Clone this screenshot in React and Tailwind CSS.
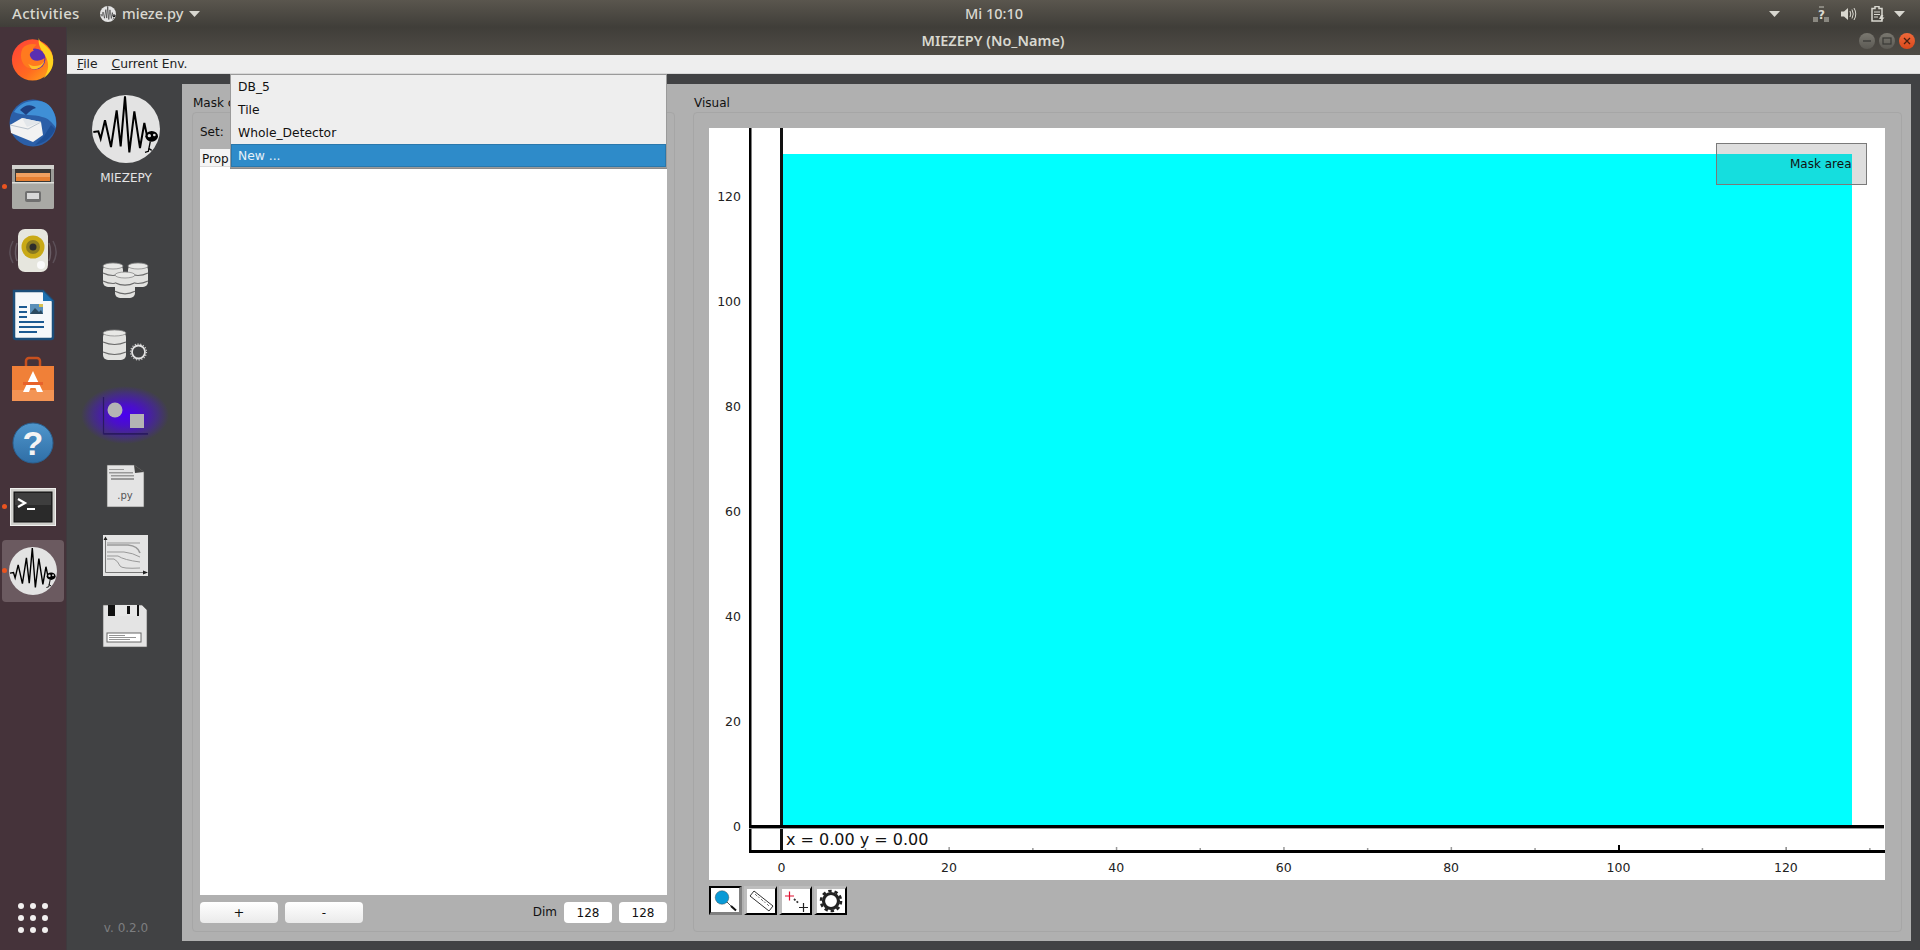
import React from "react";

const yTicks = [0, 20, 40, 60, 80, 100, 120];
const xTicks = [0, 20, 40, 60, 80, 100, 120];
const xMinor = [10, 30, 50, 70, 90, 110, 130];
const xPos = (v) => 781.5 + v * 8.37;
const yPos = (v) => 826 - v * 5.25;

function Wave({ className }) {
    return (
        <svg className={className} viewBox="21 26 204 204">
            <circle cx="123" cy="128" r="102" fill="#e3e3e3" />
            <polyline
                points="25,137 40,135 47,157 60,102 78,182 95,72 107,180 120,30 133,198 148,75 165,185 178,110 186,148"
                fill="none"
                stroke="#000"
                strokeWidth="6"
                strokeLinejoin="miter"
            />
            <ellipse cx="200" cy="150" rx="19" ry="16" fill="#000" />
            <circle cx="193" cy="148" r="5" fill="#e3e3e3" />
            <circle cx="208" cy="146" r="4" fill="#e3e3e3" />
            <path d="M196 165 L190 195 L180 198 M190 185 L200 192" stroke="#000" strokeWidth="4" fill="none" />
        </svg>
    );
}

function Firefox() {
    return (
        <svg className="w-[46px] h-[46px]" viewBox="0 0 48 48">
            <defs>
                <linearGradient id="ffa" x1="0" y1="0" x2="1" y2="1">
                    <stop offset="0" stopColor="#ff3f3a" />
                    <stop offset="0.6" stopColor="#ff6a20" />
                    <stop offset="1" stopColor="#ffb01a" />
                </linearGradient>
            </defs>
            <circle cx="23.5" cy="25" r="21.5" fill="url(#ffa)" />
            <path d="M30 2 C31 8 38 8 43 17 C48 27 44 38 35 44 C41 36 41 28 37 21 C33 15 29 10 30 2Z" fill="#ffd21f" />
            <circle cx="26" cy="24" r="11" fill="#5b2fb0" />
            <path d="M13 13 C17 8 24 8 28 9 C24 12 23 14 25 15 C22 16 20 18 21 21 C23 27 31 27 36 23 C36 31 28 36 21 34 C13 32 9 22 13 13Z" fill="#ff7a1e" />
            <path d="M19 29 C24 33 32 32 36 26 C34 33 27 36 22 34Z" fill="#ffc02a" />
        </svg>
    );
}

function Thunderbird() {
    return (
        <svg className="w-[50px] h-[50px]" viewBox="0 0 50 50">
            <circle cx="25" cy="25" r="23.5" fill="#2b5fa8" />
            <path d="M6 14 C12 3 28 0 38 5 C46 10 49 20 48 30 C44 24 40 20 34 19 C26 16 14 18 6 14Z" fill="#3f8fd6" />
            <path d="M12 12 C17 6 24 6 28 10 C24 11 21 14 18 17Z" fill="#1e3f80" />
            <path d="M2 27 L14 20 L33 24 L35 37 L25 44 L3 35Z" fill="#f2f2f2" />
            <path d="M2 27 L20 31 L33 24" fill="none" stroke="#b8c2cc" strokeWidth="1" />
            <path d="M14 20 L19 29 L33 24" fill="#e2e6ea" />
            <path d="M27 47 C37 45 44 39 47 31 L43 27 L36 38Z" fill="#1d4f96" />
        </svg>
    );
}

function Files() {
    return (
        <svg className="w-[46px] h-[48px]" viewBox="0 0 46 48">
            <rect x="2" y="2" width="42" height="44" rx="2" fill="#9c9c98" />
            <rect x="2" y="2" width="42" height="4" fill="#d2d2ce" />
            <rect x="5" y="6" width="36" height="13" fill="#3a3836" />
            <rect x="6" y="10" width="34" height="4" fill="#f0a060" />
            <rect x="6" y="14" width="34" height="4" fill="#e57f32" />
            <path d="M2 19 H44 V44 a2 2 0 0 1 -2 2 H4 a2 2 0 0 1 -2 -2Z" fill="#a9a9a5" />
            <rect x="2" y="19" width="42" height="1.5" fill="#dededa" />
            <rect x="15" y="28" width="16" height="11" rx="2" fill="#707070" />
            <rect x="17" y="30" width="12" height="6" fill="#d8d8d8" />
        </svg>
    );
}

function Speaker() {
    return (
        <svg className="w-[50px] h-[50px]" viewBox="0 0 50 50">
            <path d="M5 15 C1 22 1 30 5 37 M45 15 C49 22 49 30 45 37" stroke="#5c5058" strokeWidth="1.5" fill="none" />
            <path d="M9 17 C7 22 7 30 9 35 M41 17 C43 22 43 30 41 35" stroke="#6a5e66" strokeWidth="1.5" fill="none" />
            <rect x="10" y="3" width="30" height="43" rx="7" fill="#e6e6de" />
            <circle cx="25" cy="21" r="11.5" fill="#c9a916" />
            <circle cx="25" cy="21" r="7" fill="#8a7a20" />
            <circle cx="25" cy="21" r="3.5" fill="#2c2c2c" />
            <circle cx="33" cy="39" r="4" fill="#fafafa" />
        </svg>
    );
}

function Writer() {
    return (
        <svg className="w-[46px] h-[52px]" viewBox="0 0 46 52">
            <path d="M4 2 H33 L43 12 V48 a2 2 0 0 1 -2 2 H6 a2 2 0 0 1 -2 -2Z" fill="#f6f8fa" stroke="#1c4e7a" strokeWidth="2.5" />
            <path d="M33 2 L43 12 H33Z" fill="#1c70b0" />
            <rect x="9" y="17" width="8" height="2" fill="#1c5a92" />
            <rect x="9" y="22" width="8" height="2" fill="#1c5a92" />
            <rect x="9" y="27" width="8" height="2" fill="#1c5a92" />
            <rect x="20" y="15" width="13" height="10" fill="#5a8fb8" />
            <path d="M20 25 L25 19 L29 23 L31 21 L33 25Z" fill="#2c4a60" />
            <rect x="29" y="15" width="4" height="3" fill="#d8c050" />
            <rect x="9" y="32" width="25" height="2" fill="#1c5a92" />
            <rect x="9" y="37" width="25" height="2" fill="#1c5a92" />
            <rect x="9" y="42" width="18" height="2" fill="#1c5a92" />
        </svg>
    );
}

function Software() {
    return (
        <svg className="w-[46px] h-[48px]" viewBox="0 0 46 48">
            <path d="M16 12 V6 a3 3 0 0 1 3 -3 H27 a3 3 0 0 1 3 3 V12" fill="none" stroke="#c8501e" strokeWidth="2.5" />
            <path d="M2 11 H44 V46 H2Z" fill="#f08038" />
            <rect x="2" y="35" width="42" height="11" fill="#f39454" />
            <path d="M23 16 L33 37 H27 L25.5 33 H20.5 L19 37 H13Z" fill="#fff" />
            <rect x="13" y="27" width="20" height="3" fill="#e8622a" />
        </svg>
    );
}

function Help() {
    return (
        <svg className="w-[42px] h-[42px]" viewBox="0 0 42 42">
            <defs>
                <linearGradient id="hlp" x1="0" y1="0" x2="0" y2="1">
                    <stop offset="0" stopColor="#4f96cc" />
                    <stop offset="1" stopColor="#2f6ea6" />
                </linearGradient>
            </defs>
            <circle cx="21" cy="21" r="20" fill="url(#hlp)" stroke="#2a6090" />
            <text x="21" y="33" textAnchor="middle" fontSize="34" fontWeight="700" fill="#f4f4f4" fontFamily="Liberation Sans">?</text>
        </svg>
    );
}

function Terminal() {
    return (
        <svg className="w-[46px] h-[38px]" viewBox="0 0 46 38">
            <rect x="0.5" y="0.5" width="45" height="37" fill="#cfcfcb" stroke="#f0f0ee" />
            <rect x="4" y="4" width="38" height="30" fill="#2a2a2a" stroke="#111" />
            <rect x="5" y="5" width="36" height="12" fill="#3e3e3e" />
            <path d="M8 11 L15 15 L8 19" fill="none" stroke="#fff" strokeWidth="2.2" />
            <rect x="17" y="20" width="8" height="2" fill="#fff" />
        </svg>
    );
}

const dockItems = [
    { key: "firefox", icon: <Firefox /> },
    { key: "thunderbird", icon: <Thunderbird /> },
    { key: "files", icon: <Files />, running: true },
    { key: "speaker", icon: <Speaker /> },
    { key: "writer", icon: <Writer /> },
    { key: "software", icon: <Software /> },
    { key: "help", icon: <Help /> },
    { key: "terminal", icon: <Terminal />, running: true },
    { key: "mieze", icon: <Wave className="w-[48px] h-[48px]" />, running: true, active: true },
];

function Dock() {
    return (
        <div className="w-[67px] shrink-0 flex flex-col bg-[#45333a] border-r border-[#3f3a3e]">
            {dockItems.map((item) => (
                <div key={item.key} className="relative h-[64px] flex items-center justify-center">
                    {item.active && <div className="absolute left-[2px] top-[1px] w-[62px] h-[62px] rounded bg-[#6b5a60]"></div>}
                    {item.running && <div className="absolute left-[2px] top-[29px] w-[5px] h-[5px] rounded-full bg-[#e95420]"></div>}
                    <div className="relative flex items-center justify-center">{item.icon}</div>
                </div>
            ))}
            <div className="mt-auto mb-[17px] ml-[18px] grid grid-cols-3 w-[30px] gap-x-[6px] gap-y-[6px]">
                {[...Array(9)].map((_, i) => (
                    <div key={i} className="w-[6px] h-[6px] rounded-full bg-[#f2f0ef]"></div>
                ))}
            </div>
        </div>
    );
}

function NavIcon({ y, children }) {
    return (
        <svg className="w-[115px] h-[70px] shrink-0" viewBox={`67 ${y} 115 70`}>
            {children}
        </svg>
    );
}

function Db({ x, y, w, h }) {
    const band = h / 3;
    return (
        <g>
            <rect x={x} y={y + 2} width={w} height={h - 2} rx="5" fill="#e2e2e0" />
            <ellipse cx={x + w / 2} cy={y + 3} rx={w / 2} ry="3" fill="#e8e8e6" stroke="#8a8a8a" strokeWidth="0.8" />
            <path d={`M${x} ${y + band + 2} q${w / 2} 5 ${w} 0`} stroke="#6a6a6a" strokeWidth="1.2" fill="none" />
            <path d={`M${x} ${y + band * 2 + 2} q${w / 2} 5 ${w} 0`} stroke="#6a6a6a" strokeWidth="1.2" fill="none" />
        </g>
    );
}

function LeftNav() {
    return (
        <div className="w-[115px] shrink-0 flex flex-col items-center bg-[#414244] text-[12px]">
            <Wave className="w-[68px] h-[70px] mt-[20px] ml-[3px] shrink-0" />
            <div className="mt-[7px] ml-[3px] h-[14px] leading-[14px] text-[#e4e4e4]">MIEZEPY</div>
            <div className="h-[60px] shrink-0"></div>

            <NavIcon y={245}>
                <Db x={103} y={263} w={20} h={24} />
                <Db x={128} y={263} w={20} h={24} />
                <Db x={115} y={272} w={20} h={26} />
            </NavIcon>
            <NavIcon y={315}>
                <Db x={103} y={330} w={23} h={30} />
                <circle cx="138.5" cy="352" r="6.5" fill="none" stroke="#e2e2e2" strokeWidth="1.8" />
                <circle cx="138.5" cy="352" r="8" fill="none" stroke="#d0d0d0" strokeWidth="1.2" strokeDasharray="1.2 1.6" />
            </NavIcon>
            <NavIcon y={385}>
                <defs>
                    <radialGradient id="glow">
                        <stop offset="0" stopColor="#4a00f0" />
                        <stop offset="0.35" stopColor="#4a10c8" />
                        <stop offset="0.75" stopColor="#44307c" />
                        <stop offset="1" stopColor="#414244" />
                    </radialGradient>
                </defs>
                <ellipse cx="125" cy="415" rx="44" ry="29" fill="url(#glow)" />
                <path d="M103.5 397 V434 H148" fill="none" stroke="#2a1a60" strokeWidth="1.2" />
                <rect x="104" y="433" width="44" height="1.5" fill="#2a1a60" />
                <circle cx="115" cy="410" r="7.5" fill="#b4b4b4" />
                <rect x="130" y="414" width="14" height="14" fill="#b4b4b4" />
            </NavIcon>
            <NavIcon y={455}>
                <path d="M107 465 H134 L144 472 V507 H107Z" fill="#e4e4e4" stroke="#555" strokeWidth="0.6" />
                <path d="M134 465 L144 472 L135 473Z" fill="#444" />
                <rect x="109" y="469" width="15" height="1" fill="#999" />
                <rect x="109" y="472" width="24" height="1.5" fill="#999" />
                <rect x="111" y="475" width="23" height="1.5" fill="#999" />
                <rect x="111" y="478" width="23" height="2" fill="#999" />
                <text x="125" y="499" textAnchor="middle" fontSize="10" fill="#555">.py</text>
            </NavIcon>
            <NavIcon y={525}>
                <rect x="103" y="535" width="45" height="41" fill="#e4e4e4" />
                <path d="M105.5 540 V572.5 H144" stroke="#777" strokeWidth="1" fill="none" />
                <path d="M105.5 536.5 L103.5 540 H107.5Z M148 572.5 L143 570.5 V574.5Z" fill="#222" />
                <path d="M107 543 H140" stroke="#999" strokeWidth="1" fill="none" />
                <path d="M107 545 H128 Q138 546 140 553" stroke="#999" strokeWidth="1.6" fill="none" />
                <path d="M107 552 H124 Q133 553 140 557" stroke="#999" strokeWidth="1" fill="none" />
                <path d="M107 556 H118 Q124 560 140 562" stroke="#999" strokeWidth="1" fill="none" />
                <path d="M107 559 H114 Q118 561 120 566 Q122 569 140 568" stroke="#999" strokeWidth="1" fill="none" />
            </NavIcon>
            <NavIcon y={595}>
                <path d="M103 605 H142 L147 610 V647 H103Z" fill="#e4e4e4" stroke="#555" strokeWidth="0.6" />
                <rect x="108" y="605" width="31" height="11" fill="#111" />
                <rect x="115" y="605" width="22" height="11" fill="#e8e8e8" />
                <rect x="127" y="606" width="3" height="8" fill="#111" />
                <rect x="107" y="633" width="34" height="9" fill="#fff" stroke="#666" />
                <path d="M109 635.5 H125 M109 637.5 H136 M109 639.5 H130" stroke="#666" strokeWidth="0.7" />
            </NavIcon>

            <div className="mt-auto mb-[15px] ml-[3px] h-[14px] leading-[14px] text-[#7d7e80]">v. 0.2.0</div>
        </div>
    );
}

function Chart() {
    return (
        <svg className="w-[1176px] h-[752px] shrink-0 bg-white" viewBox="709 128 1176 752" fontFamily="DejaVu Sans" fontSize="12.5">
            <rect x="783" y="154" width="1069" height="671" fill="#00ffff" />

            {xMinor.map((v) => (
                <rect key={v} x={xPos(v) - 0.5} y="848" width="1.5" height="2" fill="#999" />
            ))}
            <rect x={xPos(20) - 0.5} y="847" width="1.5" height="3" fill="#999" />
            <rect x={xPos(40) - 0.5} y="847" width="1.5" height="3" fill="#999" />
            <rect x={xPos(60) - 0.5} y="847" width="1.5" height="3" fill="#999" />
            <rect x={xPos(80) - 0.5} y="847" width="1.5" height="3" fill="#999" />
            <rect x={xPos(120) - 0.5} y="847" width="1.5" height="3" fill="#888" />
            <rect x={xPos(100) - 0.5} y="845" width="2" height="5" fill="#000" />

            <rect x="749" y="128" width="2.5" height="724" fill="#000" />
            <rect x="780" y="128" width="3" height="724" fill="#111" />
            <rect x="749" y="825" width="1135" height="3" fill="#000" />
            <rect x="749" y="828" width="1135" height="1" fill="#999" />
            <rect x="749" y="850" width="1136" height="3" fill="#000" />

            {yTicks.map((v) => (
                <text key={v} x="741" y={yPos(v) + 5} textAnchor="end" fill="#222">
                    {v}
                </text>
            ))}
            {xTicks.map((v) => (
                <text key={v} x={xPos(v)} y="872" textAnchor="middle" fill="#222">
                    {v}
                </text>
            ))}

            <text x="786" y="845" fontSize="16" fill="#111">x = 0.00 y = 0.00</text>

            <rect x="1716.5" y="143.5" width="150" height="41" fill="#636363" fillOpacity="0.21" stroke="#7a7a7a" />
            <text x="1790" y="168" fontSize="12" fill="#111">Mask area</text>
        </svg>
    );
}

function ToolButton({ checked, children }) {
    return (
        <div
            className={
                checked
                    ? "w-[33px] h-[29px] bg-white border-t-2 border-l-2 border-t-black border-l-black border-b-[3px] border-r-[3px] border-b-[#808080] border-r-[#808080]"
                    : "w-[33px] h-[29px] bg-white border-t-[3px] border-l-[3px] border-t-[#bdbdbd] border-l-[#bdbdbd] border-b-2 border-r-2 border-b-black border-r-black"
            }
        >
            <svg className="w-full h-full" viewBox="0 0 28 24">
                {children}
            </svg>
        </div>
    );
}

function Toolbar() {
    return (
        <div className="flex gap-[2px] mt-[6px]">
            <ToolButton checked>
                <circle cx="11" cy="9.5" r="6.8" fill="#0a9ad6" stroke="#333" strokeWidth="0.4" />
                <path d="M16 14 L20 18" stroke="#555" strokeWidth="1" />
                <path d="M20 18 L25 22.5" stroke="#111" strokeWidth="2" />
            </ToolButton>
            <ToolButton>
                <path d="M3 7 L7 2 L26 17 L22 22Z" fill="#fff" stroke="#333" strokeWidth="1" />
                <path d="M8 5 L10 7 M11 7.5 L12.5 9 M14 10 L16 12 M17 12.5 L18.5 14 M20 15 L22 17" stroke="#555" strokeWidth="0.8" />
            </ToolButton>
            <ToolButton>
                <path d="M3 7 H12 M7.5 2.5 V11.5" stroke="#e01030" strokeWidth="1.2" />
                <path d="M17 18.5 H26 M21.5 14 V23" stroke="#222" strokeWidth="1.2" />
                <path d="M12 10 L17 14.5" stroke="#333" strokeWidth="1.8" strokeDasharray="2 1.5" />
            </ToolButton>
            <ToolButton>
                <circle cx="14" cy="12" r="7.5" fill="none" stroke="#222" strokeWidth="3.2" />
                <circle cx="14" cy="12" r="10" fill="none" stroke="#222" strokeWidth="2.6" strokeDasharray="3.4 2.9" />
            </ToolButton>
        </div>
    );
}

function TitleText({ children }) {
    return <div className="h-[28px] pt-[12px] leading-[14px] pl-[1px] shrink-0 text-[#111] whitespace-nowrap">{children}</div>;
}

function MaskPanel() {
    return (
        <div className="w-[483px] shrink-0 flex flex-col">
            <TitleText>Mask c</TitleText>
            <div className="flex-1 flex flex-col border border-[#a6a6a6] rounded-sm px-[7px]">
                <div className="h-[36px] pt-[2px] flex items-center text-[#111]">Set:</div>
                <div className="flex-1 bg-white">
                    <div className="h-[18px] leading-[20px] pl-[2px] bg-[#f4f4f4] border-b border-[#dcdcdc] text-[#111]">Prop</div>
                </div>
                <div className="h-[36px] pt-[7px] flex items-start">
                    <button className="w-[78px] h-[21px] rounded-sm bg-gradient-to-b from-white to-[#eaeaea] text-[#111] text-[13px]">+</button>
                    <button className="w-[78px] h-[21px] ml-[7px] rounded-sm bg-gradient-to-b from-white to-[#eaeaea] text-[#111]">-</button>
                    <div className="ml-auto h-[21px] leading-[21px] text-[#111]">Dim</div>
                    <input readOnly value="128" className="w-[48px] h-[21px] ml-[7px] rounded-sm bg-white text-center text-[#111]" />
                    <input readOnly value="128" className="w-[48px] h-[21px] ml-[7px] rounded-sm bg-white text-center text-[#111]" />
                </div>
            </div>
        </div>
    );
}

function VisualPanel() {
    return (
        <div className="w-[1209px] shrink-0 flex flex-col">
            <TitleText>Visual</TitleText>
            <div className="flex-1 flex flex-col border border-[#a6a6a6] rounded-sm pl-[15px] pt-[15px]">
                <Chart />
                <Toolbar />
            </div>
        </div>
    );
}

function Caret({ className }) {
    return (
        <svg className={className} width="11" height="6" viewBox="0 0 11 6">
            <path d="M0 0 H11 L5.5 6Z" fill="#d8d7d0" />
        </svg>
    );
}

function TopBar() {
    return (
        <div className="h-[27px] shrink-0 flex items-center relative bg-gradient-to-b from-[#5a564e] to-[#403e39] text-[#d9d8d0] text-[14.5px] font-medium [font-family:'Noto_Sans',sans-serif]">
            <div className="ml-[12px] w-[68px] text-[15px] tracking-[0.3px] whitespace-nowrap">Activities</div>
            <Wave className="w-[16px] h-[16px] ml-[20px]" />
            <div className="ml-[6px]">mieze.py</div>
            <Caret className="ml-[6px]" />
            <div className="absolute left-[962px] w-[64px] text-center">Mi 10:10</div>
            <Caret className="ml-auto mr-[33px]" />
            <svg className="mr-[11px]" width="17" height="16" viewBox="0 0 17 16">
                <rect x="0" y="11" width="5" height="5" fill="#8a8880" />
                <rect x="11" y="11" width="5" height="5" fill="#8a8880" />
                <rect x="6" y="0" width="5" height="2" fill="#8a8880" />
                <text x="8.5" y="13" textAnchor="middle" fontSize="12" fontWeight="700" fill="#d9d8d0" fontFamily="DejaVu Sans">?</text>
            </svg>
            <svg className="mr-[14px]" width="16" height="14" viewBox="0 0 16 14">
                <path d="M0 4.5 H3 L7 1 V13 L3 9.5 H0Z" fill="#d9d8d0" />
                <path d="M9 4 Q10.5 7 9 10 M11 2.5 Q13.5 7 11 11.5 M13 1 Q16.5 7 13 13" stroke="#d9d8d0" fill="none" />
            </svg>
            <svg className="mr-[9px]" width="14" height="16" viewBox="0 0 14 16">
                <path d="M1 2.5 H4 V0.5 H8 V2.5 H11 V15 H1Z" fill="none" stroke="#d9d8d0" strokeWidth="1.5" />
                <path d="M3 6 H9 M3 8.5 H9 M3 11 H7" stroke="#d9d8d0" />
                <path d="M10 9 L8 13 H10.5 L9.5 16 L13.5 11.5 H11 L12.5 9Z" fill="#d9d8d0" />
            </svg>
            <Caret className="mr-[15px]" />
        </div>
    );
}

function WindowButton({ close, children }) {
    return (
        <div
            className={
                close
                    ? "w-[16px] h-[16px] rounded-full flex items-center justify-center bg-gradient-to-b from-[#f0693a] to-[#d9481a]"
                    : "w-[16px] h-[16px] rounded-full flex items-center justify-center bg-gradient-to-b from-[#7a7870] to-[#5c5a54]"
            }
        >
            <svg width="10" height="10" viewBox="0 0 10 10">
                {children}
            </svg>
        </div>
    );
}

function TitleBar() {
    return (
        <div className="h-[28px] shrink-0 flex items-center relative bg-gradient-to-b from-[#403e39] to-[#4f4c46]">
            <div className="absolute left-[720px] w-[412px] text-center text-[14.5px] font-semibold text-[#d9d8d0] [font-family:'Noto_Sans',sans-serif]">MIEZEPY (No_Name)</div>
            <div className="ml-auto mr-[5px] flex gap-[4px]">
                <WindowButton>
                    <path d="M1 5 H9" stroke="#3a3a36" strokeWidth="1.3" />
                </WindowButton>
                <WindowButton>
                    <rect x="1" y="2" width="8" height="6" fill="none" stroke="#3a3a36" strokeWidth="1.2" />
                </WindowButton>
                <WindowButton close>
                    <path d="M2 2 L8 8 M8 2 L2 8" stroke="#4a2010" strokeWidth="1.3" />
                </WindowButton>
            </div>
        </div>
    );
}

function MenuBar() {
    return (
        <div className="h-[19px] shrink-0 flex items-center bg-[#eeeeee] border-b border-[#d8d8d8] text-[#222] text-[12.3px] leading-[20px]">
            <div className="ml-[10px]">
                <span className="underline">F</span>ile
            </div>
            <div className="ml-[14px]">
                <span className="underline">C</span>urrent Env.
            </div>
        </div>
    );
}

function SetPopup() {
    return (
        <div className="absolute left-[230px] top-[74px] w-[437px] h-[94px] bg-[#eeeeee] border border-[#9a9a9a] text-[#111] text-[12.3px] leading-[24.5px] shadow-[0_1px_0_#8a8a8a]">
            <div className="h-[23px] pl-[7px]">DB_5</div>
            <div className="h-[23px] pl-[7px]">Tile</div>
            <div className="h-[23px] pl-[7px]">Whole_Detector</div>
            <div className="h-[23px] pl-[6px] bg-[#2e8bc9] border border-[#2a78ac] leading-[22.5px] text-[#e6f1f8]">New ...</div>
        </div>
    );
}

export default function App() {
    return (
        <div className="relative w-[1920px] h-[950px] overflow-hidden flex flex-col text-[12px] [font-family:'DejaVu_Sans',sans-serif] bg-[#414244]">
            <TopBar />
            <div className="flex-1 min-h-0 flex">
                <Dock />
                <div className="flex-1 min-w-0 flex flex-col">
                    <TitleBar />
                    <MenuBar />
                    <div className="flex-1 min-h-0 flex bg-[#414244]">
                        <LeftNav />
                        <div className="flex-1 min-w-0 flex pt-[10px] pr-[9px] pb-[9px]">
                            <div className="flex-1 flex gap-[18px] pl-[10px] pb-[9px] bg-[#b0b0b0]">
                                <MaskPanel />
                                <VisualPanel />
                            </div>
                        </div>
                    </div>
                </div>
            </div>
            <SetPopup />
        </div>
    );
}
